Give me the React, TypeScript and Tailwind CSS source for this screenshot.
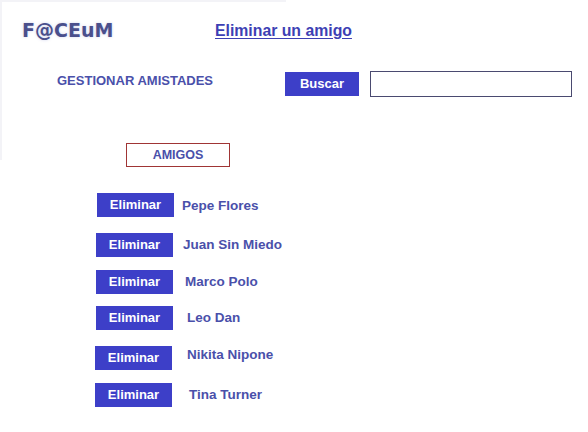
import React from "react";

const friends = [
  { name: "Pepe Flores", mt: "mt-[26px]", pl: "pl-[97px]", gap: "ml-[8px]", nudge: "translate-y-[1px]" },
  { name: "Juan Sin Miedo", mt: "mt-[16px]", pl: "pl-[96px]", gap: "ml-[10px]", nudge: "" },
  { name: "Marco Polo", mt: "mt-[13px]", pl: "pl-[96px]", gap: "ml-[12px]", nudge: "" },
  { name: "Leo Dan", mt: "mt-[12px]", pl: "pl-[96px]", gap: "ml-[14px]", nudge: "" },
  { name: "Nikita Nipone", mt: "mt-[16px]", pl: "pl-[95px]", gap: "ml-[15px]", nudge: "-translate-y-[3px]" },
  { name: "Tina Turner", mt: "mt-[13px]", pl: "pl-[95px]", gap: "ml-[17px]", nudge: "" },
];

export default function App() {
  return (
    <div className="relative w-[588px] h-[432px] bg-white overflow-hidden font-['Liberation_Sans',Arial,sans-serif]">
      <div className="pointer-events-none absolute left-0 top-0 w-[286px] h-[160px] border-l-2 border-t-2 border-[#f3f3f7]" />

      <div className="flex items-end pt-[19px]">
        <div className="ml-[22px] w-[90px] text-[19px] leading-[22px] font-bold text-[#4a4f8c] font-['DejaVu_Sans',Verdana,sans-serif] [text-shadow:0_0_3px_rgba(120,130,200,0.35)]">
          F@CEuM
        </div>
        <a
          href="#"
          className="ml-[103px] text-[15.8px] leading-[20px] font-bold text-[#3d3fb4] underline underline-offset-2"
        >
          Eliminar un amigo
        </a>
      </div>

      <div className="flex items-center mt-[30px]">
        <div className="ml-[57px] w-[228px] text-[13px] font-bold text-[#4a50aa] -translate-y-[3px]">
          GESTIONAR AMISTADES
        </div>
        <button className="w-[74px] h-[24px] bg-[#3d3fc8] text-white text-[13px] font-bold">
          Buscar
        </button>
        <input
          className="ml-[11px] w-[202px] h-[26px] border-[1.5px] border-[#4a4a70] outline-none"
          type="text"
        />
      </div>

      <div className="mt-[46px] ml-[126px] w-[104px] h-[24px] border border-[#a03535] flex items-center justify-center text-[12.5px] font-bold text-[#4a50aa]">
        AMIGOS
      </div>

      <div className="flex flex-col">
        {friends.map((f) => (
          <div key={f.name} className={`flex items-center ${f.mt} ${f.pl}`}>
            <button className="w-[77px] h-[24px] bg-[#3d3fc8] text-white text-[13px] font-bold">
              Eliminar
            </button>
            <span className={`${f.gap} text-[13.5px] font-bold text-[#4a50aa] ${f.nudge}`}>
              {f.name}
            </span>
          </div>
        ))}
      </div>
    </div>
  );
}
